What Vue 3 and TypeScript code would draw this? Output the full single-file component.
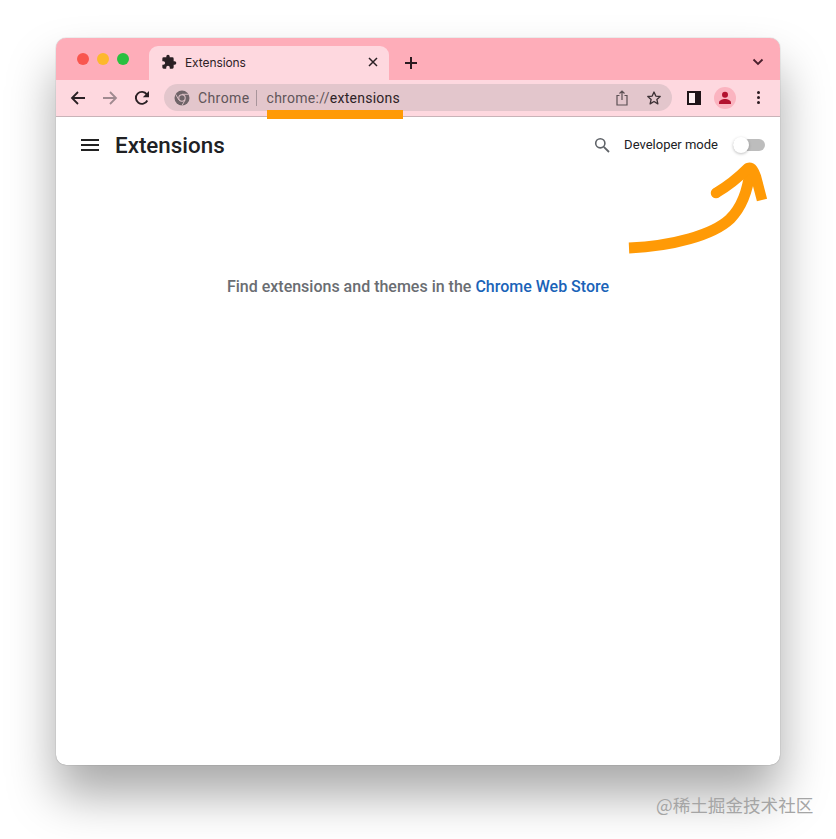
<script setup lang="ts">
const lights = ["#f9564f", "#fdb82c", "#29c03f"];
</script>

<template>
  <div class="page">
    <div class="window">
      <div class="tabstrip">
        <div class="lights">
          <span v-for="c in lights" :key="c" class="light" :style="{ background: c }"></span>
        </div>
        <div class="tab">
          <svg class="puzzle" width="16" height="16" viewBox="0 0 24 24">
            <path fill="#2a2024" d="M20.5 11H19V7a2 2 0 0 0-2-2h-4V3.5a2.5 2.5 0 0 0-5 0V5H4a2 2 0 0 0-2 2v3.8h1.5a2.7 2.7 0 0 1 0 5.4H2V20a2 2 0 0 0 2 2h3.8v-1.5a2.7 2.7 0 0 1 5.4 0V22H17a2 2 0 0 0 2-2v-4h1.5a2.5 2.5 0 0 0 0-5z" />
          </svg>
          <span class="tab-title">Extensions</span>
          <svg class="tab-close" width="10" height="10" viewBox="0 0 10 10">
            <path d="M1 1l8 8M9 1l-8 8" stroke="#2a2024" stroke-width="1.5" fill="none" />
          </svg>
        </div>
        <svg class="plus" width="14" height="14" viewBox="0 0 14 14">
          <path d="M7 1v12M1 7h12" stroke="#2a1a20" stroke-width="2" fill="none" />
        </svg>
        <svg class="chevron" width="12" height="8" viewBox="0 0 12 8">
          <path d="M1.5 1.5L6 6l4.500-4.500" stroke="#4a1f2c" stroke-width="1.800" fill="none" />
        </svg>
      </div>

      <div class="toolbar">
        <svg class="nav" width="16" height="16" viewBox="0 0 16 16">
          <path d="M15 8H2M8 2L2 8l6 6" stroke="#2a2024" stroke-width="1.800" fill="none" />
        </svg>
        <svg class="nav" width="16" height="16" viewBox="0 0 16 16">
          <path d="M1 8h13M8 2l6 6-6 6" stroke="#a08a90" stroke-width="1.800" fill="none" />
        </svg>
        <svg class="nav" width="16" height="16" viewBox="0 0 16 16">
          <path d="M13.300 10.500A6 6 0 1 1 12.800 4.400" stroke="#2a2024" stroke-width="1.900" fill="none" />
          <path d="M15 1v6.200H8.800z" fill="#2a2024" />
        </svg>

        <div class="omnibox">
          <svg class="chrome-logo" width="16" height="16" viewBox="0 0 16 16">
            <circle cx="8" cy="8" r="7.500" fill="#6f6468" />
            <circle cx="8" cy="8" r="3.700" fill="#e3c6cc" />
            <circle cx="8" cy="8" r="2.700" fill="#6f6468" />
            <path d="M8 4.300h6.500M4.800 9.900L1.700 4.300M11.200 9.800L8 15.500" stroke="#e3c6cc" stroke-width="0.900" fill="none" />
          </svg>
          <span class="origin">Chrome</span>
          <span class="divider"></span>
          <span class="url">chrome://<b>extensions</b></span>
          <svg class="share" width="14" height="16" viewBox="0 0 14 16">
            <path d="M4.500 5.500H2v9.500h10V5.500H9.500M7 10V1.300M4.500 3.500L7 1l2.500 2.500" stroke="#5c5054" stroke-width="1.200" fill="none" />
          </svg>
          <svg class="star" width="16" height="16" viewBox="0 0 24 24">
            <path d="M12 3l2.700 6.100 6.600.7-5 4.400 1.500 6.500L12 17.300l-5.800 3.400 1.500-6.500-5-4.400 6.600-.7z" stroke="#3c3034" stroke-width="2" fill="none" stroke-linejoin="round" />
          </svg>
        </div>

        <svg class="sidepanel" width="14" height="14" viewBox="0 0 14 14">
          <rect x="1" y="1" width="12" height="12" fill="#fff0f2" stroke="#1f1418" stroke-width="2" />
          <rect x="8" y="1" width="5" height="12" fill="#1f1418" />
        </svg>
        <div class="avatar">
          <svg width="14" height="14" viewBox="0 0 14 14">
            <circle cx="7" cy="3.800" r="3" fill="#b3122f" />
            <path d="M1 13v-1.500C1 9.300 4.500 8 7 8s6 1.300 6 3.500V13z" fill="#b3122f" />
          </svg>
        </div>
        <div class="dots"><i></i><i></i><i></i></div>
      </div>

      <div class="content">
        <header class="ext-header">
          <div class="burger"><i></i><i></i><i></i></div>
          <h1>Extensions</h1>
          <svg class="search" width="16" height="16" viewBox="0 0 16 16">
            <circle cx="6.300" cy="6.300" r="4.600" stroke="#5f6368" stroke-width="1.600" fill="none" />
            <path d="M9.800 9.800L15 15" stroke="#5f6368" stroke-width="1.800" fill="none" />
          </svg>
          <span class="devmode">Developer mode</span>
          <div class="toggle"><span class="knob"></span></div>
        </header>
        <p class="empty">
          Find extensions and themes in the <a>Chrome Web Store</a>
        </p>
      </div>

      <!-- annotations drawn over the screenshot -->
      <span class="underline"></span>
      <svg class="arrow" width="150" height="100" viewBox="0 0 150 100">
        <path d="M1 89C45 87 85 76 102 60C114 48 120 30 122 12" stroke="#ff9a06" stroke-width="11" fill="none" />
        <path d="M88 34C100 27 110 19 120 9C124 8 126 12 128 18L134 41" stroke="#ff9a06" stroke-width="10.500" fill="none" stroke-linejoin="round" />
        <circle cx="88" cy="34" r="5.250" fill="#ff9a06" />
      </svg>
    </div>
    <span class="watermark">@稀土掘金技术社区</span>
  </div>
</template>

<style scoped>
.page {
  position: relative;
  width: 836px;
  height: 839px;
  padding: 38px 56px 0;
  box-sizing: border-box;
  background: #fff;
  font-family: Roboto, "Liberation Sans", sans-serif;
  overflow: hidden;
}
.window {
  position: relative;
  width: 724px;
  height: 727px;
  border-radius: 10px;
  background: #fff;
  box-shadow: 0 30px 48px rgba(0, 0, 0, 0.34), 0 0 1px rgba(0, 0, 0, 0.5);
  display: flex;
  flex-direction: column;
}
.tabstrip {
  height: 42px;
  background: #feadb9;
  border-radius: 10px 10px 0 0;
  display: flex;
  align-items: flex-end;
  flex: none;
}
.lights {
  display: flex;
  gap: 8px;
  align-self: flex-start;
  margin: 15px 0 0 21px;
}
.light {
  width: 12px;
  height: 12px;
  border-radius: 50%;
}
.tab {
  width: 240px;
  height: 34px;
  margin-left: 20px;
  background: #fed8df;
  border-radius: 9px 9px 0 0;
  display: flex;
  align-items: center;
  padding: 0 11px 2px 12px;
  box-sizing: border-box;
}
.tab-title {
  margin-left: 8px;
  font-size: 12px;
  color: #2d2226;
  font-family: Inter, Roboto, sans-serif;
  letter-spacing: -0.1px;
  flex: 1;
}
.puzzle {
  display: block;
}
.plus {
  margin: 0 0 10px 15px;
}
.chevron {
  margin: 0 16px 14px auto;
}
.toolbar {
  height: 37px;
  background: #fed8df;
  border-bottom: 1px solid #c9b3b8;
  box-sizing: border-box;
  display: flex;
  align-items: center;
  padding: 0 0 1px 14px;
  flex: none;
}
.nav {
  margin-right: 16px;
  flex: none;
}
.nav:nth-child(3) {
  margin-right: 14px;
}
.omnibox {
  width: 508px;
  height: 27px;
  border-radius: 14px;
  background: #e3c6cc;
  display: flex;
  align-items: center;
  padding-left: 10px;
  box-sizing: border-box;
  font-size: 14px;
  flex: none;
}
.origin {
  margin-left: 8px;
  color: #5f5559;
  letter-spacing: 0.4px;
}
.divider {
  width: 1px;
  height: 16px;
  background: #a8959b;
  margin: 0 10px 0 6px;
}
.url {
  color: #5f5559;
  flex: 1;
  letter-spacing: 0.27px;
}
.url b {
  font-weight: 400;
  color: #2d2226;
}
.share {
  margin-right: 17px;
}
.star {
  margin-right: 10px;
}
.sidepanel {
  margin-left: 15px;
  flex: none;
}
.avatar {
  width: 22px;
  height: 22px;
  margin-left: 13px;
  border-radius: 50%;
  background: #fbb4c0;
  display: flex;
  align-items: center;
  justify-content: center;
  flex: none;
}
.avatar svg {
  display: block;
}
.dots {
  margin-left: 21px;
  display: flex;
  flex-direction: column;
  gap: 2px;
}
.dots i {
  width: 3px;
  height: 3px;
  border-radius: 50%;
  background: #2a1a20;
}
.content {
  flex: 1;
  display: flex;
  flex-direction: column;
  border-radius: 0 0 10px 10px;
}
.ext-header {
  height: 56px;
  display: flex;
  align-items: center;
  padding: 0 15px 0 25px;
}
.burger {
  width: 18px;
  display: flex;
  flex-direction: column;
  gap: 3px;
}
.burger i {
  height: 2px;
  background: #222;
}
h1 {
  margin: 0 0 0 16px;
  font-size: 22.4px;
  font-weight: 500;
  color: #202124;
  flex: 1;
}
.search {
  margin-right: 14px;
}
.devmode {
  font-size: 13px;
  color: #202124;
  margin-right: 15px;
  margin-bottom: 1px;
}
.toggle {
  position: relative;
  width: 32px;
  height: 12px;
  border-radius: 6px;
  background: #bdbdbd;
}
.knob {
  position: absolute;
  left: 0;
  top: -2px;
  width: 16px;
  height: 16px;
  border-radius: 50%;
  background: #fff;
  box-shadow: 0 1px 3px rgba(0, 0, 0, 0.25);
}
.empty {
  margin: 104px 0 0;
  text-align: center;
  font-size: 16px;
  font-weight: 500;
  color: #6a6d72;
}
.empty a {
  color: #1a63b8;
}
.underline {
  position: absolute;
  left: 211px;
  top: 72px;
  width: 136px;
  height: 9px;
  background: #ff9a06;
}
.arrow {
  position: absolute;
  left: 572px;
  top: 121px;
}
.watermark {
  position: absolute;
  left: 656px;
  top: 792px;
  font-size: 17.6px;
  color: #a5a5a5;
  font-family: "Noto Sans CJK SC", sans-serif;
  white-space: nowrap;
}
</style>
